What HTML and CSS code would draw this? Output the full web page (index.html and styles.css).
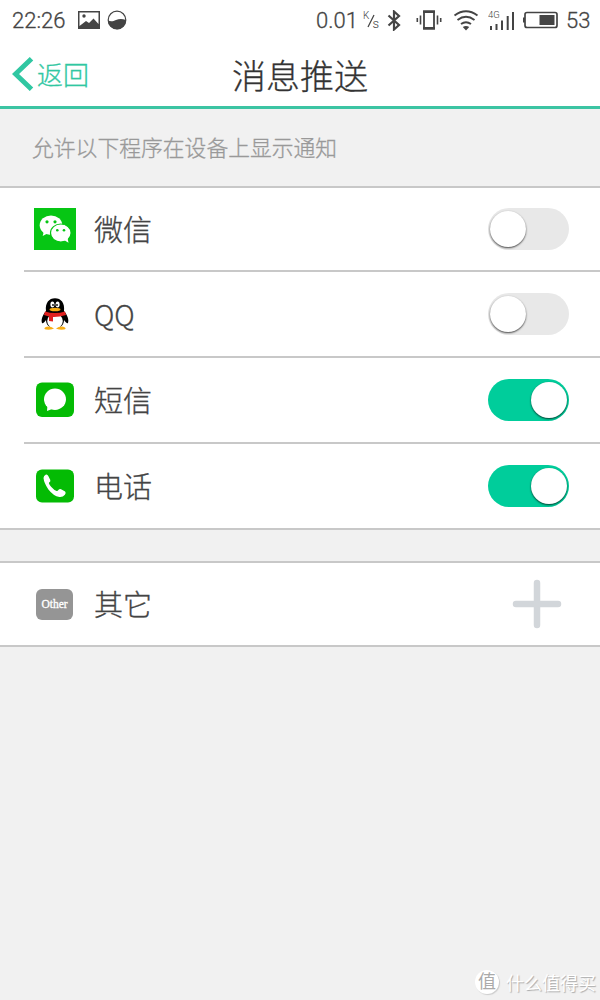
FILE: index.html
```
<!DOCTYPE html>
<html lang="zh-CN">

<head>
    <meta charset="UTF-8">
    <meta name="viewport" content="width=device-width, initial-scale=1.0">
    <title>消息推送</title>
    <link rel="stylesheet" href="styles.css">
</head>

<body>
    <div class="status">
        <span class="time">22:26</span>
        <svg class="pic" width="22" height="18" viewBox="0 0 22 18">
            <path d="M0 0h22v18H0zM1.500 1.500v13.500l6.500-5 3 2 4.500-4.500 5 5.500v-11.500z" fill="#444" fill-rule="evenodd"/>
            <circle cx="6" cy="5" r="1.700" fill="#444"/>
        </svg>
        <svg class="ball" width="20" height="20" viewBox="0 0 20 20">
            <circle cx="10" cy="10" r="8.800" fill="none" stroke="#444" stroke-width="1.200"/>
            <path d="M1 10.500c3 1.200 5 .8 8-.5s6-1.500 10 0A9 9 0 0 1 1 10.500z" fill="#444"/>
        </svg>
        <span class="speed">0.01</span>
        <svg class="unit" width="17" height="20" viewBox="0 0 17 20">
            <path d="M11 5L5 17" stroke="#444" stroke-width="1.200"/>
            <text x="0" y="9" class="unit-text">K</text>
            <text x="9.500" y="18" class="unit-text unit-s">s</text>
        </svg>
        <svg class="bluetooth" width="14" height="21" viewBox="0 0 14 21">
            <path d="M1.500 5.500l10.500 9.500-5 4.500v-18l5 4.500-10.500 9.500" fill="none" stroke="#444" stroke-width="2.200"/>
        </svg>
        <svg class="vibrate" width="26" height="20" viewBox="0 0 26 20">
            <path d="M8 1.500h10v17H8z" fill="none" stroke="#444" stroke-width="1.800"/>
            <path d="M7 1.800h12M7 18.200h12" stroke="#444" stroke-width="2.400"/>
            <path d="M4.500 5.500v9M21.500 5.500v9M1.300 8v4M24.700 8v4" stroke="#444" stroke-width="1.600"/>
        </svg>
        <svg class="wifi" width="26" height="22" viewBox="0 0 26 22">
            <path d="M1.500 6.500q11.500-8.500 23 0M4.500 11q8.500-6.500 17 0M8 15q5-3.600 10 0" fill="none" stroke="#444" stroke-width="1.900"/>
            <path d="M9.800 18q3.200-2.200 6.400 0L13 21.500z" fill="#444"/>
        </svg>
        <svg class="signal" width="27" height="21" viewBox="0 0 27 21">
            <text x="0" y="8" class="net">4G</text>
            <path d="M3 16v4M8.500 14v6M14 10.500v9.500M19.700 6v14M25 2v18" stroke="#444" stroke-width="2"/>
        </svg>
        <svg class="battery" width="35" height="18" viewBox="0 0 35 18">
            <rect x="2" y="1.500" width="32" height="15" rx="2" fill="none" stroke="#444" stroke-width="1.700"/>
            <path d="M0 6.500h2v5H0zM16.500 4h15v10h-15z" fill="#444"/>
        </svg>
        <span class="percent">53</span>
    </div>

    <div class="header">
        <div class="back">
            <svg width="22" height="34" viewBox="0 0 22 34">
                <path d="M19.500 1.800L3.500 17l16 15.200" fill="none" stroke="#30c7a2" stroke-width="5"/>
            </svg>
            <span>返回</span>
        </div>
        <h1>消息推送</h1>
    </div>

    <p class="hint">允许以下程序在设备上显示通知</p>

    <ul class="list">
        <li class="item">
            <span class="icon">
                <svg width="42" height="42" viewBox="0 0 42 42">
                    <path d="M0 0h42v42H0z" fill="#06c614"/>
                    <ellipse cx="17" cy="17.300" rx="11.300" ry="9.800" fill="#fff"/>
                    <path d="M10 23l-1.300 5 5.500-3z" fill="#fff"/>
                    <ellipse cx="26.800" cy="25" rx="10.300" ry="9" fill="#fff" stroke="#06c614" stroke-width="1.200"/>
                    <path d="M30 32l4.500 2.800-1-5z" fill="#fff"/>
                    <g fill="#06c614">
                        <circle cx="13" cy="13.800" r="1.600"/>
                        <circle cx="21" cy="13.800" r="1.600"/>
                        <circle cx="23.300" cy="22.300" r="1.300"/>
                        <circle cx="30" cy="22.300" r="1.300"/>
                    </g>
                </svg>
            </span>
            <span class="name">微信</span>
            <span class="switch"></span>
        </li>
        <li class="item">
            <span class="icon">
                <svg width="28" height="32" viewBox="0 0 28 32">
                    <path d="M5 13C1 18 0 22 1 25q1 1 4-3 0 5 4 7h10q4-2 4-7 3 4 4 3c1-3 0-7-4-12C24 5 20 .3 14 .3S4 5 5 13z" fill="#000"/>
                    <ellipse cx="14" cy="23" rx="7.800" ry="7.500" fill="#fff"/>
                    <path d="M4 29.500q4-2.500 9 1-2 1.500-8 1-2.500-.6-1-2zM24 29.500q-4-2.500-9 1 2 1.500 8 1 2.500-.6 1-2z" fill="#f8ad14"/>
                    <path d="M4 13.500q10 3 20 0l1 3.500q-7 2.200-13 2v4.500l-4-.4v-4.500L3 17z" fill="#e1201f"/>
                    <ellipse cx="14" cy="11.500" rx="5.500" ry="1.800" fill="#f8ad14"/>
                    <ellipse cx="11.400" cy="6.500" rx="2" ry="2.900" fill="#fff"/>
                    <ellipse cx="16.600" cy="6.500" rx="2" ry="2.900" fill="#fff"/>
                    <circle cx="12" cy="7" r=".9"/>
                    <circle cx="16" cy="7" r=".9"/>
                </svg>
            </span>
            <span class="name latin">QQ</span>
            <span class="switch"></span>
        </li>
        <li class="item">
            <span class="icon">
                <svg width="38" height="36" viewBox="0 0 38 36">
                    <rect y=".5" width="38" height="34.500" rx="6" fill="#04bb04"/>
                    <ellipse cx="19" cy="17.300" rx="11" ry="10.700" fill="#fff"/>
                    <path d="M11.500 23l-.5 6 6.500-2.500z" fill="#fff"/>
                </svg>
            </span>
            <span class="name">短信</span>
            <span class="switch on"></span>
        </li>
        <li class="item">
            <span class="icon">
                <svg width="38" height="34" viewBox="0 0 38 34">
                    <rect y=".5" width="38" height="33" rx="6" fill="#04bb04"/>
                    <path d="M7.500 9q0-2.500 2.500-3.500 1.500-.3 2.300 1.500l2 4q.5 1.500-1.200 2.500-.8 1 2 4.200 3 3.400 5.500 4.300 1 .2 2-1.200 1.200-1.300 2.500-.5l4 2.200q1.300 1.200-.2 3.300-2 2.500-5.500 2.200-6-1-11-7.500Q8 14 7.500 9z" fill="#fff"/>
                </svg>
            </span>
            <span class="name">电话</span>
            <span class="switch on"></span>
        </li>
    </ul>

    <ul class="list other">
        <li class="item">
            <span class="icon"><span class="other-icon">Other</span></span>
            <span class="name">其它</span>
            <svg class="plus" width="50" height="50" viewBox="0 0 50 50">
                <path d="M25 4v42M4 25h42" stroke="#d2d6da" stroke-width="6.500" stroke-linecap="round"/>
            </svg>
        </li>
    </ul>

    <div class="watermark">
        <span class="logo">值</span>
        <span>什么值得买</span>
    </div>
</body>

</html>
```
FILE: styles.css
```
* {
    margin: 0;
    padding: 0;
    box-sizing: border-box;
}

body {
    height: 1000px;
    overflow: hidden;
    background: #f1f1f1;
    color: #444;
    font-family: Roboto, "Noto Sans CJK SC", sans-serif;
    font-weight: 300;
    -webkit-text-stroke: .3px;
}

svg {
    display: block;
    flex: none;
}

.status {
    display: flex;
    align-items: center;
    height: 40px;
    padding-left: 12px;
    background: #fff;
    font-size: 22px;
}

.time {
    width: 55px;
}

.pic {
    margin-left: 11px;
}

.ball {
    margin-left: 7px;
}

.speed {
    width: 43px;
    margin-left: 189px;
}

.unit {
    margin-left: 4px;
}

.unit-text {
    fill: #444;
    font-size: 10px;
}

.unit-s {
    font-size: 13px;
}

.bluetooth {
    margin-left: 7px;
}

.vibrate {
    margin-left: 15px;
}

.wifi {
    margin-left: 11px;
}

.signal {
    margin-left: 9px;
}

.net {
    fill: #444;
    font-size: 9.5px;
}

.battery {
    margin-left: 8px;
}

.percent {
    margin-left: 8px;
}

.header {
    display: grid;
    grid-template-columns: 1fr auto 1fr;
    align-items: center;
    height: 69px;
    border-bottom: 3px solid #3cc4a3;
    background: #fff;
}

.back {
    display: flex;
    align-items: center;
    padding: 1px 0 0 12px;
    color: #30c7a2;
    font-size: 26px;
}

.back span {
    margin-left: 3px;
}

h1 {
    padding-top: 2px;
    color: #333;
    font-size: 34px;
    font-weight: 300;
}

.hint {
    height: 77px;
    padding-left: 32px;
    color: #999;
    font-size: 21.8px;
    line-height: 79px;
}

.list {
    border-top: 2px solid #c8c8c8;
    border-bottom: 2px solid #c8c8c8;
    background: #fff;
    list-style: none;
}

.item {
    display: flex;
    align-items: center;
    height: 84px;
    padding: 0 31px 0 24px;
}

.item:first-child {
    height: 82px;
}

.item + .item {
    position: relative;
    height: 86px;
    padding-top: 2px;
}

/* 分割线左侧留白 */
.item + .item::before {
    content: '';
    position: absolute;
    top: 0;
    left: 24px;
    right: 0;
    height: 2px;
    background: #c8c8c8;
}

.icon {
    display: flex;
    justify-content: center;
    width: 61px;
}

.name {
    margin-left: 9px;
    padding-bottom: 2px;
    font-size: 29px;
}

.latin {
    padding-bottom: 0;
    font-family: "Noto Sans CJK SC", sans-serif;
    font-size: 28px;
}

.switch {
    width: 81px;
    height: 42px;
    margin-left: auto;
    padding: 3px 2px;
    border-radius: 21px;
    background: #e8e8e8;
}

.switch::before {
    content: '';
    display: block;
    width: 36px;
    height: 36px;
    border-radius: 50%;
    background: #fff;
    box-shadow: 0 1px 2px rgba(0, 0, 0, .7);
}

.on {
    background: #00cd9b;
}

.on::before {
    margin-left: auto;
}

.other {
    margin-top: 31px;
}

.other-icon {
    width: 37px;
    height: 31px;
    border-radius: 6px;
    background: #959595;
    color: #fff;
    font: 11.5px/31px "Liberation Serif", serif;
    text-align: center;
}

.plus {
    margin-left: auto;
    margin-right: 7px;
}

.watermark {
    position: absolute;
    right: 4px;
    bottom: 5px;
    display: flex;
    align-items: center;
    color: #fff;
    font-size: 18px;
    font-weight: 400;
    text-shadow: 1px 1px 1px #aaa;
    -webkit-text-stroke: 0;
}

.logo {
    width: 24px;
    height: 24px;
    margin-right: 7px;
    border-radius: 50%;
    background: #fff;
    box-shadow: 1px 1px 1px #ccc;
    color: #aaa;
    font-size: 18px;
    line-height: 24px;
    text-align: center;
    text-shadow: none;
}
```
